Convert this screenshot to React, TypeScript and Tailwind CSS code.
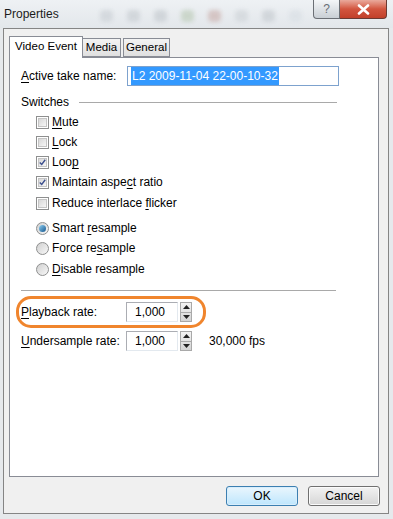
import React from 'react';

const font = { fontFamily: '"Liberation Sans", Arial, sans-serif' };

function U({ children }: { children: React.ReactNode }) {
    return <span className="underline underline-offset-2">{children}</span>;
}

function CheckBox({ checked }: { checked?: boolean }) {
    return (
        <div className="flex h-[13px] w-[13px] items-center justify-center border border-[#8e8f8f] bg-white">
            <div className="flex h-[9px] w-[9px] items-center justify-center border border-[#c5c5c5] bg-gradient-to-br from-[#d8d8d8] to-[#f6f6f6]">
                {checked && (
                    <svg width="9" height="9" viewBox="0 0 9 9">
                        <path d="M1 4.5 L3.5 7 L8 1" fill="none" stroke="#3c4f8e" strokeWidth="1.8" />
                    </svg>
                )}
            </div>
        </div>
    );
}

function Radio({ checked }: { checked?: boolean }) {
    return (
        <div className="flex h-[13px] w-[13px] items-center justify-center rounded-full border border-[#8e8f8f] bg-gradient-to-br from-[#d0d0d0] to-[#f8f8f8]">
            {checked && <div className="h-[7px] w-[7px] rounded-full bg-gradient-to-br from-[#8fd0f2] to-[#11578e]" />}
        </div>
    );
}

function Row({ children, className = '' }: { children: React.ReactNode; className?: string }) {
    return <div className={`ml-[15px] flex h-[20px] items-center gap-[3px] ${className}`}>{children}</div>;
}

function Spinner() {
    return (
        <div className="ml-[2px] flex h-[20px] w-[12px] flex-col border border-[#a9a9a9] bg-gradient-to-b from-[#f4f4f4] to-[#d4d4d4]">
            <div className="flex flex-1 items-center justify-center border-b border-[#a9a9a9]">
                <svg width="7" height="4" viewBox="0 0 7 4">
                    <path d="M0 4 L3.5 0 L7 4 Z" fill="#222" />
                </svg>
            </div>
            <div className="flex flex-1 items-center justify-center">
                <svg width="7" height="4" viewBox="0 0 7 4">
                    <path d="M0 0 L3.5 4 L7 0 Z" fill="#222" />
                </svg>
            </div>
        </div>
    );
}

function NumberField({ value }: { value: string }) {
    return (
        <div className="flex items-center">
            <div className="flex h-[20px] w-[52px] items-center border border-[#abadb3] border-r-[#e3e9ef] border-b-[#e3e9ef] bg-white pl-[8px]">
                {value}
            </div>
            <Spinner />
        </div>
    );
}

export default function App() {
    const blobs = ['#d0d5da', '#cdd2d7', '#cbd0d5', '#c4d1c2', '#d0bcba', '#d3d8dc', '#ccd1d6', '#dbe1e6'];

    return (
        <div className="flex h-[519px] w-[393px] flex-col bg-[#e6e9ec] text-[11px] text-black" style={font}>
            {/* title bar */}
            <div className="relative flex h-[28px] items-center bg-gradient-to-b from-[#eef1f4] to-[#e3e7eb]">
                <div className="absolute inset-0 flex items-center gap-[14px] pt-[4px] pl-[100px] opacity-80 blur-[2px]">
                    {blobs.map((c, i) => (
                        <div key={i} className="h-[12px] w-[13px] rounded-sm" style={{ backgroundColor: c }} />
                    ))}
                </div>
                <span className="relative pl-[4px] text-[12px] text-[#1b1b1b]">Properties</span>
                <div className="absolute top-0 right-[6px] flex h-[19px]">
                    <div className="flex w-[27px] items-center justify-center rounded-bl-[4px] border border-t-0 border-[#6b6f75] bg-gradient-to-b from-[#f4f6f8] to-[#c9cfd5] text-[12px] text-[#6a6f76]">
                        ?
                    </div>
                    <div className="flex w-[47px] items-center justify-center rounded-br-[4px] border border-t-0 border-l-0 border-[#6b3a33] bg-gradient-to-b from-[#e9a99c] via-[#d2553f] to-[#c2402a]">
                        <svg width="13" height="11" viewBox="0 0 13 11">
                            <path d="M2 1.5 L11 9.5 M11 1.5 L2 9.5" stroke="#fff" strokeWidth="2.6" strokeLinecap="round" />
                        </svg>
                    </div>
                </div>
            </div>

            {/* dialog frame */}
            <div className="ml-[3px] flex h-[486px] w-[386px] flex-col border border-[#858585] bg-[#f0f0f0]">
                <div className="flex h-[28px] items-end pl-[5px]">
                    <div className="relative z-10 -mb-px flex h-[22px] w-[74px] items-center justify-center border border-b-0 border-[#898c95] bg-white pb-[2px] text-[11.5px]">
                        Video Event
                    </div>
                    <div className="flex h-[19px] w-[38px] items-center justify-center border border-l-0 border-[#898c95] bg-gradient-to-b from-[#f3f3f3] to-[#e0e0e0] text-[11.5px]">
                        Media
                    </div>
                    <div className="ml-[2px] flex h-[19px] w-[47px] items-center justify-center border border-[#898c95] bg-gradient-to-b from-[#f3f3f3] to-[#e0e0e0] text-[11.5px]">
                        General
                    </div>
                </div>

                <div className="relative ml-[5px] flex h-[420px] w-[370px] flex-col border border-[#898c95] bg-white pl-[11px] text-[12px]">
                    <div className="mt-[8px] flex h-[20px] items-center">
                        <span className="w-[106px]">
                            <U>A</U>ctive take name:
                        </span>
                        <div className="flex h-[20px] w-[212px] items-center border border-[#7da2ce] pl-[3px]">
                            <span className="bg-[#3399ff] px-px text-white">L2 2009-11-04 22-00-10-32</span>
                        </div>
                    </div>

                    <div className="mt-[6px] flex h-[20px] items-center gap-[10px] pr-[41px]">
                        <span>Switches</span>
                        <div className="h-px flex-1 bg-[#a9a9a9]" />
                    </div>

                    <Row>
                        <CheckBox />
                        <span>
                            <U>M</U>ute
                        </span>
                    </Row>
                    <Row>
                        <CheckBox />
                        <span>
                            <U>L</U>ock
                        </span>
                    </Row>
                    <Row>
                        <CheckBox checked />
                        <span>
                            Loo<U>p</U>
                        </span>
                    </Row>
                    <Row>
                        <CheckBox checked />
                        <span>
                            Maintain aspe<U>c</U>t ratio
                        </span>
                    </Row>
                    <Row className="mt-px">
                        <CheckBox />
                        <span>
                            Reduce interlace <U>f</U>licker
                        </span>
                    </Row>

                    <Row className="mt-[5px]">
                        <Radio checked />
                        <span>
                            Smart <U>r</U>esample
                        </span>
                    </Row>
                    <Row>
                        <Radio />
                        <span>
                            Force re<U>s</U>ample
                        </span>
                    </Row>
                    <Row className="mt-px">
                        <Radio />
                        <span>
                            <U>D</U>isable resample
                        </span>
                    </Row>

                    <div className="mt-[11px] h-px w-[315px] bg-[#a9a9a9]" />

                    <div className="mt-[11px] flex h-[20px] items-center">
                        <span className="w-[105px]">
                            <U>P</U>layback rate:
                        </span>
                        <NumberField value="1,000" />
                    </div>
                    <div className="mt-[9px] flex h-[20px] items-center">
                        <span className="w-[105px]">
                            <U>U</U>ndersample rate:
                        </span>
                        <NumberField value="1,000" />
                        <span className="ml-[17px]">30,000 fps</span>
                    </div>

                    {/* annotation */}
                    <div className="pointer-events-none absolute top-[238px] left-[6px] h-[32px] w-[190px] rounded-[15px] border-[3px] border-[#f0852d]" />
                </div>

                <div className="mt-[9px] flex justify-end gap-[10px] pr-[8px]">
                    <button className="h-[20px] w-[72px] rounded-[3px] border border-[#3c7fb1] bg-gradient-to-b from-[#eaf6fd] to-[#bee6fd] text-[12px] shadow-[inset_0_0_0_1px_#d8eefc]">
                        OK
                    </button>
                    <button className="h-[20px] w-[72px] rounded-[3px] border border-[#707070] bg-gradient-to-b from-[#f2f2f2] to-[#d6d6d6] text-[12px] shadow-[inset_0_0_0_1px_#fbfbfb]">
                        Cancel
                    </button>
                </div>
            </div>
        </div>
    );
}
